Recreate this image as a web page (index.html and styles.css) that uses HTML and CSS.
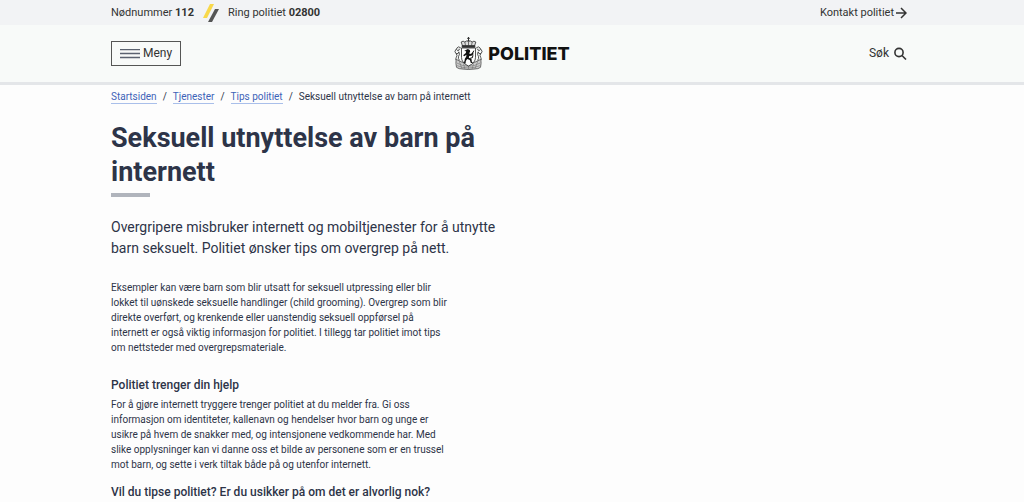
FILE: index.html
```html
<!DOCTYPE html>
<html lang="no">
<head>
    <meta charset="UTF-8">
    <meta name="viewport" content="width=device-width, initial-scale=1.0">
    <title>Seksuell utnyttelse av barn på internett</title>
    <link rel="stylesheet" href="styles.css">
</head>
<body>
    <div class="top-bar">
        <div class="container top-bar-content">
            <div class="phone-numbers">
                <span>Nødnummer <strong>112</strong></span>
                <svg class="stripes" width="16" height="20" viewBox="0 0 16 20" aria-hidden="true">
                    <path d="M7 1h4L4 15H0z" fill="#f8d84a"/>
                    <path d="M12 6h4L9 19H5z" fill="#555"/>
                </svg>
                <span>Ring politiet <strong>02800</strong></span>
            </div>
            <a class="contact-link" href="#">Kontakt politiet
                <svg width="11" height="12" viewBox="0 0 11 12" aria-hidden="true">
                    <path d="M0 6h10M5 1l5 5-5 5" fill="none" stroke="#333" stroke-width="1.5"/>
                </svg>
            </a>
        </div>
    </div>

    <header class="header">
        <div class="container header-content">
            <button class="menu-button" type="button">
                <svg width="20" height="10" viewBox="0 0 20 10" aria-hidden="true">
                    <path d="M0 .5h20M0 4.5h20M0 8.5h20" stroke="#5b6270" stroke-width="1.3"/>
                </svg>
                Meny
            </button>
            <a class="logo" href="#">
                <svg width="29" height="33" viewBox="0 0 86 99" fill="none" stroke="#333" stroke-width="2.5" aria-hidden="true">
                    <!-- Crown -->
                    <path d="M43 0v12M39 4h8" stroke-width="3"/>
                    <circle cx="43" cy="12" r="3" fill="#222" stroke="none"/>
                    <path d="M25 27L21 15q6-5 11 0 4-5 11-2 7-3 11 2 5-5 11 0l-4 12z" fill="#ddd"/>
                    <path d="M32 15l2 11M43 14v12M54 15l-2 11" stroke-width="2"/>
                    <path d="M24 26h38v5H24z" fill="#333"/>
                    <!-- Scrolls and base -->
                    <path d="M20 33q-7-7-12 0-3 6 3 8 6-1 4-6M5 37q-6 8 1 13 7 2 8-5M6 49q5 7 0 13-3 5 1 9M14 44q4 8-1 15-2 6 3 11"/>
                    <path d="M66 33q7-7 12 0 3 6-3 8-6-1-4-6M81 37q6 8-1 13-7 2-8-5M80 49q-5 7 0 13 3 5-1 9M72 44q-4 8 1 15 2 6-3 11"/>
                    <path d="M6 67q-2 12 1 24l8 4q28 5 56 0l8-4q3-12 1-24-37 24-74 0z" fill="#ccc" stroke="#555"/>
                    <path d="M8 78q35 20 70 0M9 86q34 14 68 0M15 72l8 22M28 79l4 17M43 84v13M58 79l-4 17M71 72l-8 22" stroke-width="2" stroke="#777"/>
                    <!-- Shield with lion -->
                    <path d="M22 33h42v28q0 17-21 26-21-9-21-26z" fill="#fff"/>
                    <path d="M35 39l6-3 6 3 1 6-4 4 6 2 6-5 2 3-6 7-7 1-1 5 8 4 1 8 4 4h-7l-3-9-8-3-4 6-1 8-6-4 3-3 1-8 4-6 1-6-7 5-3-3 8-7 1-5-6-1z" fill="#111" stroke="none"/>
                    <path d="M48 64q10 0 8-9-3-6 3-14" stroke="#111" stroke-width="3"/>
                </svg>
                <span>POLITIET</span>
            </a>
            <button class="search-button" type="button">
                Søk
                <svg width="13" height="13" viewBox="0 0 13 13" fill="none" stroke="#333" stroke-width="1.6" aria-hidden="true">
                    <circle cx="5" cy="5.5" r="4.1"/>
                    <path d="M8 8.5l4 4"/>
                </svg>
            </button>
        </div>
    </header>

    <main class="container">
        <nav class="breadcrumbs" aria-label="Brødsmulesti">
            <a href="#">Startsiden</a>
            <span>/</span>
            <a href="#">Tjenester</a>
            <span>/</span>
            <a href="#">Tips politiet</a>
            <span>/</span>
            <span>Seksuell utnyttelse av barn på internett</span>
        </nav>

        <article class="article">
            <h1>Seksuell utnyttelse av barn på internett</h1>
            <p class="lead">Overgripere misbruker internett og mobiltjenester for å utnytte barn seksuelt. Politiet ønsker tips om overgrep på nett.</p>
            <div class="text">
                <p>Eksempler kan være barn som blir utsatt for seksuell utpressing eller blir lokket til uønskede seksuelle handlinger (child grooming). Overgrep som blir direkte overført, og krenkende eller uanstendig seksuell oppførsel på internett er også viktig informasjon for politiet. I tillegg tar politiet imot tips om nettsteder med overgrepsmateriale.</p>
                <h2>Politiet trenger din hjelp</h2>
                <p>For å gjøre internett tryggere trenger politiet at du melder fra. Gi oss informasjon om identiteter, kallenavn og hendelser hvor barn og unge er usikre på hvem de snakker med, og intensjonene vedkommende har. Med slike opplysninger kan vi danne oss et bilde av personene som er en trussel mot barn, og sette i verk tiltak både på og utenfor internett.</p>
                <h3>Vil du tipse politiet? Er du usikker på om det er alvorlig nok?</h3>
            </div>
        </article>
    </main>
</body>
</html>
```

FILE: styles.css
```css
/* General Styles */
body {
    margin: 0;
    font-family: Roboto, sans-serif;
    font-size: 10px;
    line-height: 15px;
    color: #2d3448;
    background: #fdfdfd;
}

a {
    color: inherit;
    text-decoration: none;
}

button {
    font: inherit;
    color: inherit;
    background: none;
    cursor: pointer;
}

h1, h2, h3, p {
    margin: 0;
}

.container {
    max-width: 796px;
    margin: 0 auto;
    padding-right: 6px;
}

/* Top bar */
.top-bar {
    background: #f2f3f5;
    color: #333;
    font-size: 11px;
}

.top-bar-content {
    display: flex;
    justify-content: space-between;
    align-items: center;
    height: 25px;
}

.phone-numbers {
    display: flex;
    align-items: center;
    gap: 9px;
}

.contact-link {
    display: flex;
    align-items: center;
    gap: 2px;
}

/* Header */
.header {
    background: #f8faf9;
    border-bottom: 3px solid #e4e6e9;
    color: #333;
}

.header-content {
    display: grid;
    grid-template-columns: 1fr auto 1fr;
    align-items: center;
    height: 57px;
}

.menu-button {
    justify-self: start;
    display: flex;
    align-items: center;
    gap: 3px;
    height: 25px;
    padding: 0 8px;
    border: 1px solid #555;
    font-size: 12px;
}

.logo {
    display: flex;
    align-items: center;
    gap: 5px;
    padding-left: 6px;
    font-family: Inter, sans-serif;
    font-size: 18px;
    font-weight: 800;
    line-height: 24px;
    color: #111;
}

.search-button {
    justify-self: end;
    display: flex;
    align-items: center;
    gap: 5px;
    padding: 0;
    border: 0;
    font-size: 12px;
}

/* Breadcrumbs */
.breadcrumbs {
    display: flex;
    align-items: baseline;
    gap: 6px;
    padding-top: 4px;
}

.breadcrumbs a {
    color: #3d63b8;
    line-height: 13px;
    border-bottom: 1px solid #a9bfea;
}

/* Article */
.article {
    max-width: 400px;
}

h1 {
    margin-top: 17px;
    font-size: 27px;
    line-height: 34px;
}

h1::after {
    content: "";
    display: block;
    width: 39px;
    height: 4px;
    margin-top: 4px;
    background: #b0b4bc;
}

.lead {
    margin-top: 20px;
    font-size: 14px;
    line-height: 21px;
}

.text {
    max-width: 340px;
    margin-top: 21px;
}

h2, h3 {
    font-size: 12px;
    font-weight: 500;
    line-height: 16px;
    white-space: nowrap;
}

h2 {
    margin-top: 22px;
    margin-bottom: 4px;
}

h3 {
    margin-top: 12px;
}
```
